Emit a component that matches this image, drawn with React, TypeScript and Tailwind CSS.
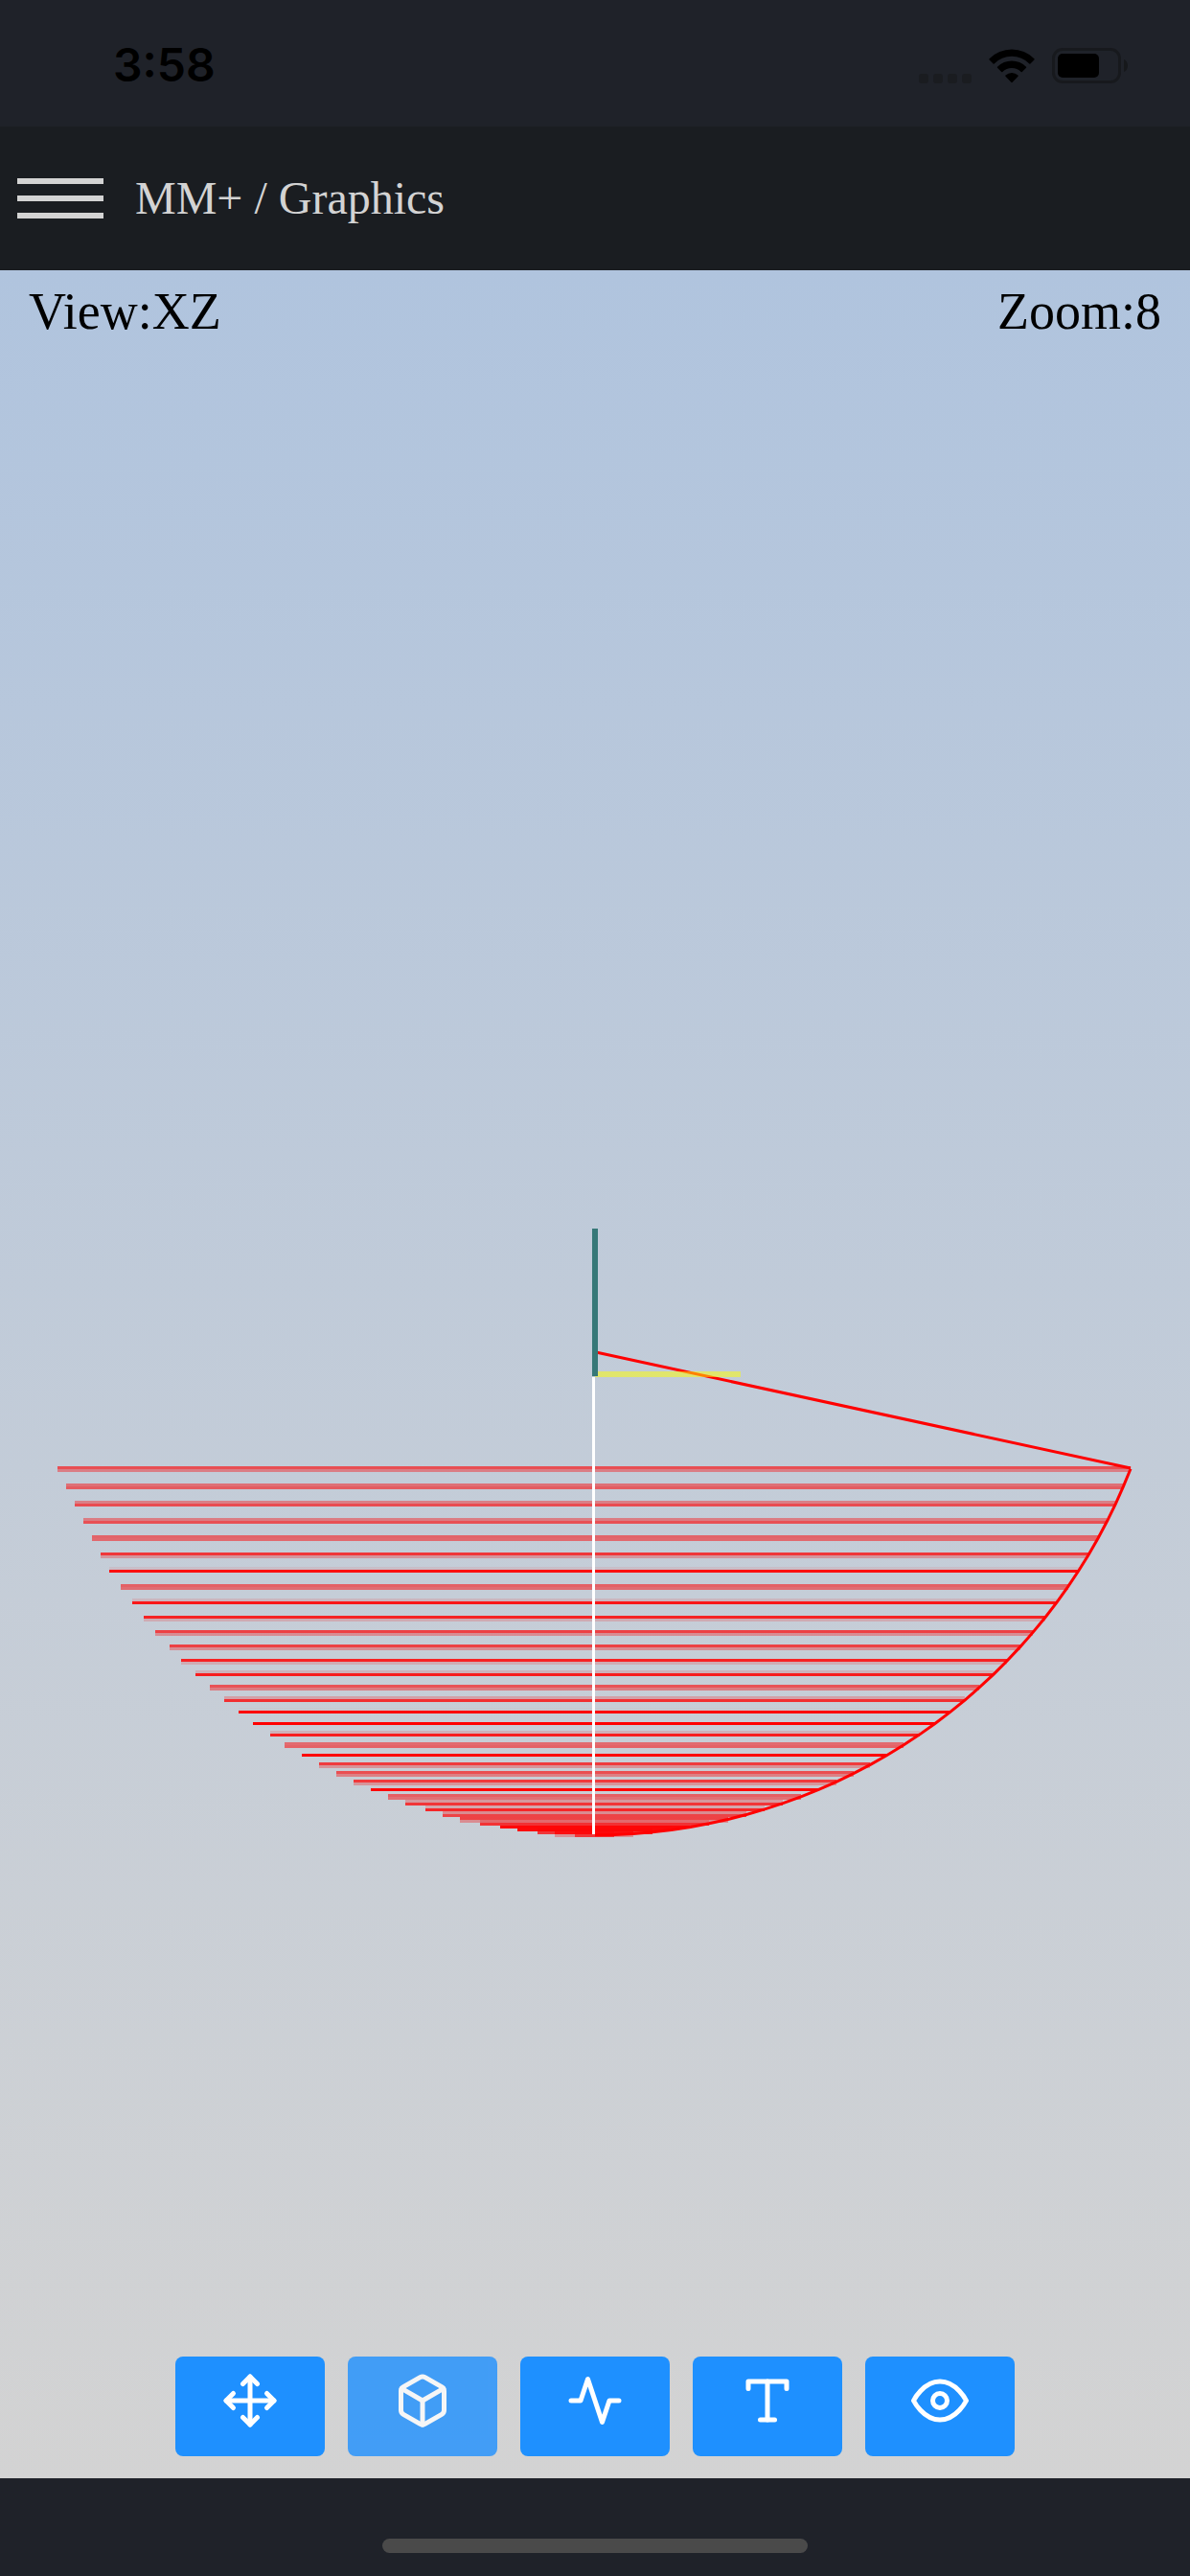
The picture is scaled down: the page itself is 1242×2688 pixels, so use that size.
import type { ReactNode } from "react";

const VIEW_W = 1242;
const VIEW_H = 2304;

// Ball-nose toolpath: passes sweep from the rim of an arc down to its lowest point.
const ARC = { cx: 621, cy: 1033, r: 600, sweep: 68.7, passes: 36 };
const CELL = 3;

const arcPoints = Array.from({ length: ARC.passes + 1 }, (_, i) => {
  const angle = (ARC.sweep * (1 - i / ARC.passes) * Math.PI) / 180;
  return { dx: ARC.r * Math.sin(angle), y: ARC.cy - 0.3 + ARC.r * Math.cos(angle) };
});

const arcPath = arcPoints.map((p) => `${(ARC.cx + p.dx).toFixed(1)},${p.y.toFixed(1)}`).join(" ");

// Each pass is spread over the two raster rows it touches, weighted by coverage.
function PassLine({ dx, y }: { dx: number; y: number }) {
  const offset = (y - CELL / 2) / CELL;
  const row = Math.floor(offset);
  const lower = offset - row;
  const x = Math.round((ARC.cx - 1 - dx) / CELL) * CELL;
  const width = ARC.cx + dx - x;
  return (
    <g fill="#ff0000">
      <rect x={x} y={row * CELL} width={width} height={CELL} opacity={1 - lower} />
      <rect x={x} y={(row + 1) * CELL} width={width} height={CELL} opacity={lower} />
    </g>
  );
}

function Toolpath() {
  return (
    <svg
      className="absolute inset-0 size-full"
      viewBox={`0 0 ${VIEW_W} ${VIEW_H}`}
      preserveAspectRatio="xMidYMid meet"
      role="img"
      aria-label="Toolpath in the XZ plane"
    >
      <g shapeRendering="crispEdges">
        {arcPoints.map((p, i) => (
          <PassLine key={i} dx={p.dx} y={p.y} />
        ))}
      </g>
      <polyline points={arcPath} fill="none" stroke="#ff0000" strokeWidth="3" />
      <line x1="622" y1="1129" x2="1180" y2="1250" stroke="#ff0000" strokeWidth="3" />
      <rect x="618" y="1155" width="3" height="477" fill="#ffffff" />
      <rect x="621" y="1149" width="152" height="6" fill="#ffff00" opacity="0.5" />
      <rect x="618" y="1000" width="6" height="154" fill="#367878" />
    </svg>
  );
}

function ToolIcon({ children }: { children: ReactNode }) {
  return (
    <svg
      className="size-[60px]"
      viewBox="0 0 24 24"
      fill="none"
      stroke="currentColor"
      strokeWidth="2"
      strokeLinecap="round"
      strokeLinejoin="round"
      aria-hidden="true"
    >
      {children}
    </svg>
  );
}

const tools = [
  {
    label: "Pan",
    active: false,
    icon: (
      <>
        <polyline points="5 9 2 12 5 15" />
        <polyline points="9 5 12 2 15 5" />
        <polyline points="15 19 12 22 9 19" />
        <polyline points="19 9 22 12 19 15" />
        <line x1="2" y1="12" x2="22" y2="12" />
        <line x1="12" y1="2" x2="12" y2="22" />
      </>
    ),
  },
  {
    label: "View",
    active: true,
    icon: (
      <>
        <path d="M21 16V8a2 2 0 0 0-1-1.73l-7-4a2 2 0 0 0-2 0l-7 4A2 2 0 0 0 3 8v8a2 2 0 0 0 1 1.73l7 4a2 2 0 0 0 2 0l7-4A2 2 0 0 0 21 16z" />
        <polyline points="3.27 6.96 12 12.01 20.73 6.96" />
        <line x1="12" y1="22.08" x2="12" y2="12" />
      </>
    ),
  },
  {
    label: "Toolpath",
    active: false,
    icon: <polyline points="22 12 18 12 15 21 9 3 6 12 2 12" />,
  },
  {
    label: "Text",
    active: false,
    icon: (
      <>
        <polyline points="4 7 4 4 20 4 20 7" />
        <line x1="9" y1="20" x2="15" y2="20" />
        <line x1="12" y1="4" x2="12" y2="20" />
      </>
    ),
  },
  {
    label: "Visibility",
    active: false,
    icon: (
      <>
        <path d="M1 12s4-8 11-8 11 8 11 8-4 8-11 8-11-8-11-8z" />
        <circle cx="12" cy="12" r="3" />
      </>
    ),
  },
];

function StatusBar() {
  return (
    <div className="flex h-[132px] shrink-0 items-center justify-between pt-1 pr-16 pl-[118px]">
      <span className="font-['Inter',sans-serif] text-[48px] leading-[60px] font-semibold text-black">3:58</span>
      <div className="flex items-end gap-[18px]">
        <div className="flex gap-[5px]">
          <span className="size-[10px] rounded-[3px] bg-[#1a1c20]" />
          <span className="size-[10px] rounded-[3px] bg-[#1a1c20]" />
          <span className="size-[10px] rounded-[3px] bg-[#1a1c20]" />
          <span className="size-[10px] rounded-[3px] bg-[#1a1c20]" />
        </div>
        <svg className="h-9 w-12" viewBox="0 0 48 36" fill="#000000" aria-hidden="true">
          <path d="M0.6 10.3a33 33 0 0 1 46.8 0 .8.8 0 0 1 0 1.1l-4 4a.8.8 0 0 1-1.1 0 26 26 0 0 0-36.6 0 .8.8 0 0 1-1.1 0l-4-4a.8.8 0 0 1 0-1.1z" />
          <path d="M9 18.7a21.2 21.2 0 0 1 30 0 .8.8 0 0 1 0 1.1l-4.2 4.2a.8.8 0 0 1-1.1 0 13.8 13.8 0 0 0-19.4 0 .8.8 0 0 1-1.1 0L9 19.8a.8.8 0 0 1 0-1.1z" />
          <path d="M17.5 27.5a9.6 9.6 0 0 1 13 0 .9.9 0 0 1 0 1.2l-5.8 6.1a1 1 0 0 1-1.4 0l-5.8-6.1a.9.9 0 0 1 0-1.2z" />
        </svg>
        <svg className="h-[37px] w-20" viewBox="0 0 80 37" aria-hidden="true">
          <rect x="1.5" y="1.5" width="69" height="34" rx="9.5" fill="none" stroke="#17191d" strokeWidth="3" />
          <rect x="6" y="6" width="43" height="25" rx="5" fill="#000000" />
          <path d="M75 12c2.700 1 4 3.600 4 6.500s-1.300 5.500-4 6.500z" fill="#16181b" />
        </svg>
      </div>
    </div>
  );
}

export default function App() {
  return (
    <div className="flex min-h-screen flex-col bg-[#1f2229] font-['Liberation_Serif',serif]">
      <StatusBar />
      <header className="flex h-[150px] shrink-0 items-center gap-[33px] bg-[#1a1d21] px-[18px] text-[#d3d3d3]">
        <button type="button" aria-label="Open menu" className="flex w-[90px] flex-col gap-3">
          <span className="h-[6px] w-full bg-[#d3d3d3]" />
          <span className="h-[6px] w-full bg-[#d3d3d3]" />
          <span className="h-[6px] w-full bg-[#d3d3d3]" />
        </button>
        <h1 className="text-[48px] leading-[56px]">MM+ / Graphics</h1>
      </header>
      <main className="relative flex flex-1 flex-col justify-between bg-[linear-gradient(to_bottom,#b0c4de,#d3d3d3)]">
        <Toolpath />
        <div className="relative flex justify-between px-[30px] pt-[13px] text-[54px] leading-[60px] text-black">
          <span>View:XZ</span>
          <span>Zoom:8</span>
        </div>
        <div className="relative flex justify-center gap-6 pb-[23px]">
          {tools.map((tool) => (
            <button
              key={tool.label}
              type="button"
              aria-label={tool.label}
              aria-pressed={tool.active}
              className="flex h-[104px] w-[156px] justify-center rounded-[8px] bg-[#1e90ff] pt-4 text-white aria-pressed:opacity-80"
            >
              <ToolIcon>{tool.icon}</ToolIcon>
            </button>
          ))}
        </div>
      </main>
      <footer className="flex h-[102px] shrink-0 items-end justify-center pb-6">
        <div className="h-[15px] w-[444px] rounded-full bg-[#4a4a4a]" />
      </footer>
    </div>
  );
}
